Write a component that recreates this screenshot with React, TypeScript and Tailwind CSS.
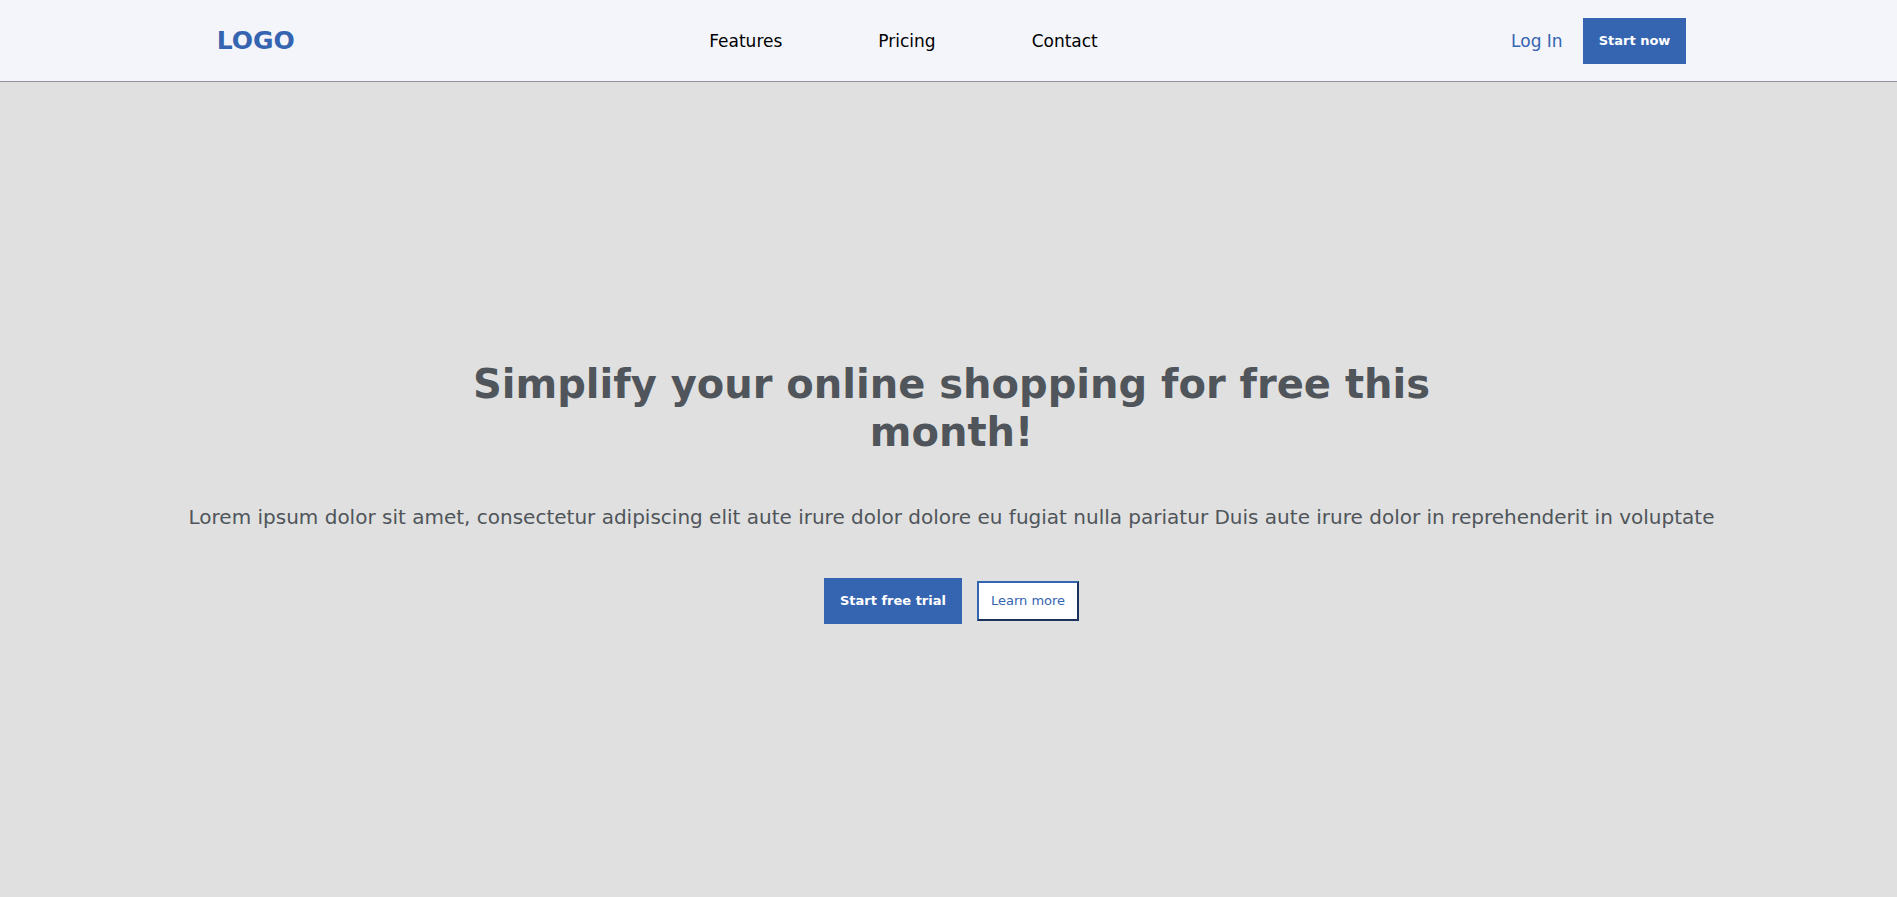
const links = ["Features", "Pricing", "Contact"];

export default function App() {
  return (
    <div className="flex min-h-screen flex-col bg-[#e0e0e0] font-['DejaVu_Sans',sans-serif] text-[#4f555a]">
      <header className="border-b border-[#909299] bg-[#f3f5fb]">
        <div className="mx-auto grid h-[81px] w-[78%] grid-cols-[1fr_auto_1fr] items-center pr-0.5 pl-2">
          <a href="#" className="justify-self-start text-[25px] leading-8 font-bold text-[#3564b0]">
            LOGO
          </a>
          <nav className="flex gap-24 pr-24 text-[17px] leading-6 text-black">
            {links.map((link) => (
              <a key={link} href="#">
                {link}
              </a>
            ))}
          </nav>
          <div className="flex items-center gap-5 justify-self-end">
            <a href="#" className="text-[17px] leading-6 text-[#3564b0]">
              Log In
            </a>
            <button className="h-[46px] bg-[#3564b0] px-4 text-[13px] font-bold text-white">
              Start now
            </button>
          </div>
        </div>
      </header>
      <main className="flex grow flex-col items-center justify-center pt-1 pl-1.5 text-center">
        <h1 className="w-full max-w-[1000px] text-[40px] leading-[48px] font-bold">
          Simplify your online shopping for free this month!
        </h1>
        <p className="mt-12 text-xl leading-[26px]">
          Lorem ipsum dolor sit amet, consectetur adipiscing elit aute irure dolor dolore eu fugiat
          nulla pariatur Duis aute irure dolor in reprehenderit in voluptate
        </p>
        <div className="mt-12 flex items-center gap-[15px]">
          <button className="h-[46px] bg-[#3564b0] px-4 text-[13px] font-bold text-white">
            Start free trial
          </button>
          <button className="h-10 border-2 border-t-[#3564b0] border-r-[#1b335c] border-b-[#1b335c] border-l-[#3564b0] bg-white px-3 text-[13px] text-[#3564b0]">
            Learn more
          </button>
        </div>
      </main>
    </div>
  );
}
